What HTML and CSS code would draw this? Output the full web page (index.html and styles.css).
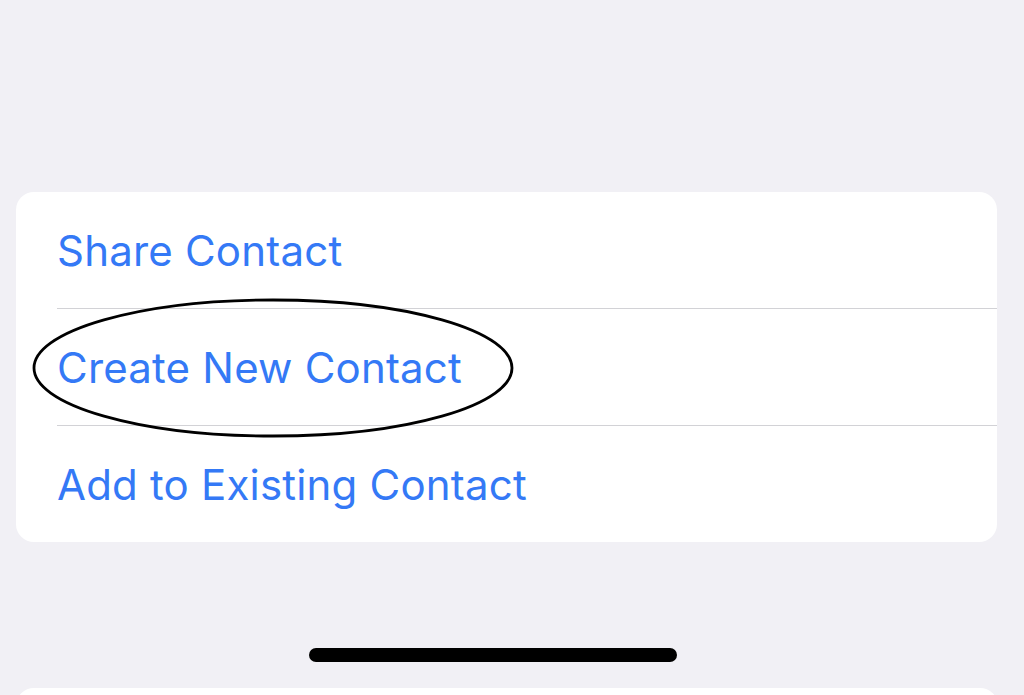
FILE: index.html
```html
<!DOCTYPE html>
<html>
<head>
<meta charset="utf-8">
<link rel="stylesheet" href="styles.css">
</head>
<body>
<div class="screen">
  <div class="sheet">
    <div class="row"><span class="label">Share Contact</span></div>
    <div class="row sep"><span class="label">Create New Contact</span></div>
    <div class="row sep"><span class="label">Add to Existing Contact</span></div>
    <svg class="circle" width="484" height="142" viewBox="0 0 484 142">
      <ellipse cx="241" cy="70" rx="239" ry="68" fill="none" stroke="#000" stroke-width="2.8"/>
    </svg>
  </div>
  <div class="home-bar"></div>
  <div class="next-card"></div>
</div>
</body>
</html>
```
FILE: styles.css
```css
html, body {
  margin: 0;
  padding: 0;
  background: #f1f0f5;
  width: 1024px;
  height: 695px;
  overflow: hidden;
}
.screen {
  display: flex;
  flex-direction: column;
  padding-top: 192px;
  font-family: Inter, "Liberation Sans", sans-serif;
}
.sheet {
  position: relative;
  margin-left: 16px;
  width: 981px;
  background: #fff;
  border-radius: 18px;
  display: flex;
  flex-direction: column;
}
.row {
  height: 116px;
  display: flex;
  align-items: center;
  padding-left: 41px;
}
.row.sep {
  border-top: 1px solid #d2d2d6;
  margin-left: 41px;
  padding-left: 0;
}
.label {
  color: #3479f6;
  font-size: 42px;
  letter-spacing: 0.2px;
  line-height: 1;
  margin-top: 2px;
}
.circle {
  position: absolute;
  left: 16px;
  top: 106px;
}
.home-bar {
  margin-top: 106px;
  margin-left: 309px;
  width: 368px;
  height: 14px;
  border-radius: 7px;
  background: #000;
}
.next-card {
  margin-top: 26px;
  margin-left: 16px;
  width: 982px;
  height: 40px;
  background: #fff;
  border-radius: 18px 18px 0 0;
}
```
